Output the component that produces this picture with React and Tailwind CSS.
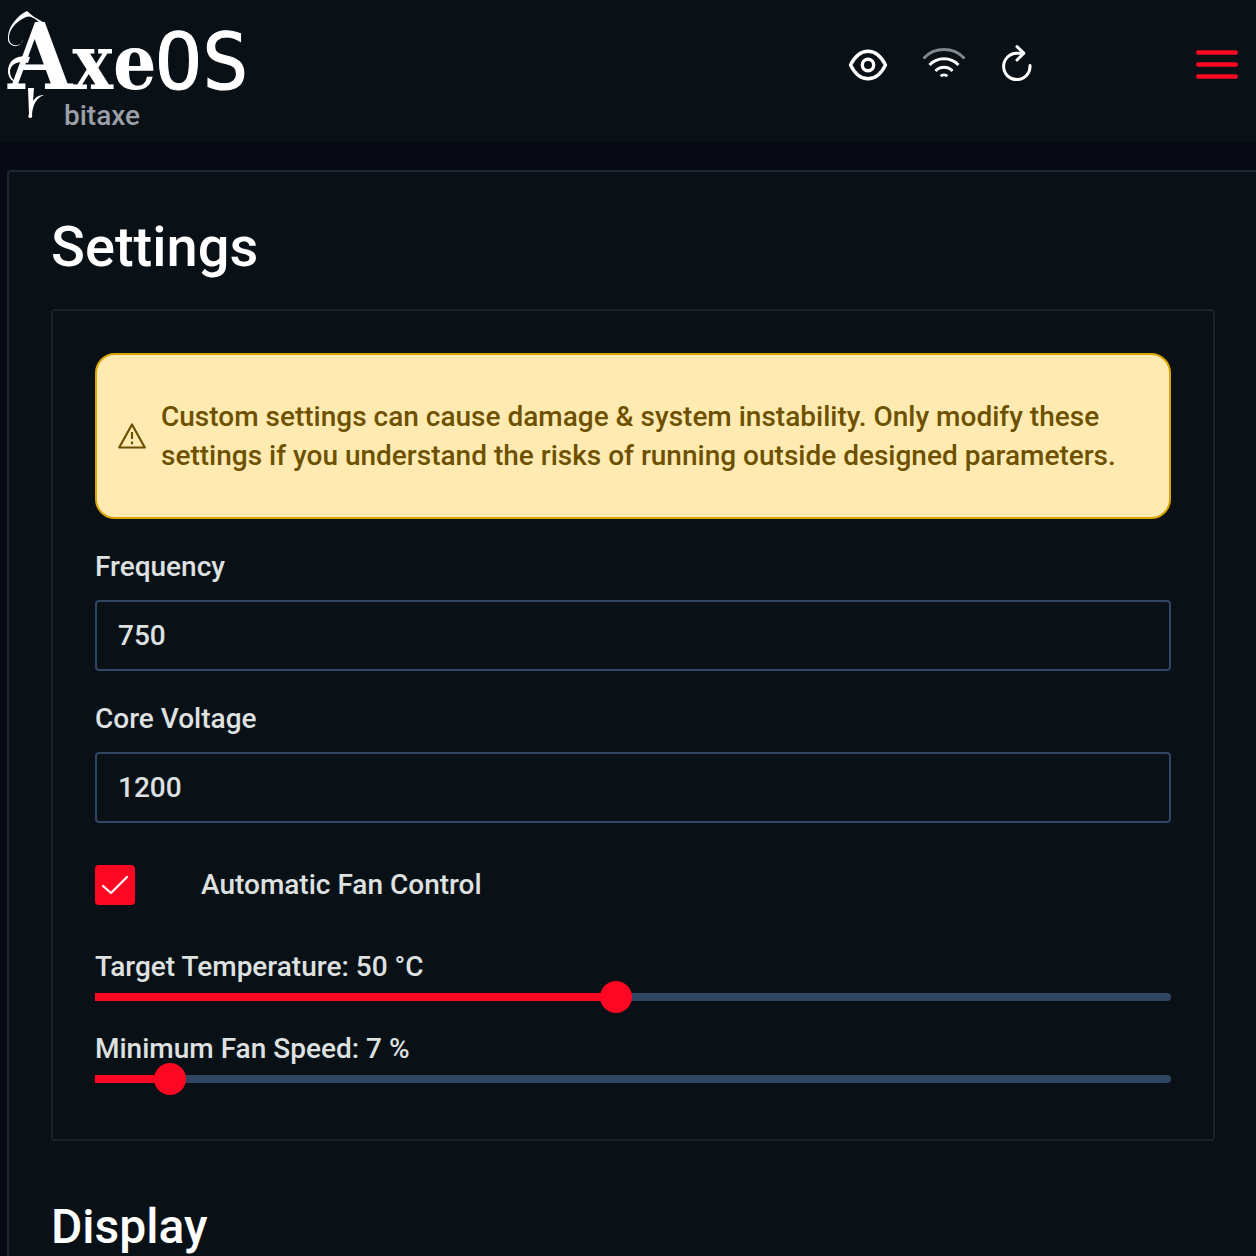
import { useState } from 'react';

function Logo() {
  return (
    <a href="#" aria-label="AxeOS" className="relative flex flex-col text-white">
      <span className="flex h-[100px] items-baseline leading-[124px]">
        <span className="w-[147px] font-['DejaVu_Serif_Condensed','Liberation_Serif',serif] text-[76px] font-bold">
          <span className="text-[92px] leading-none">A</span>xe
        </span>
        <span className="font-['DejaVu_Sans_Mono',monospace] text-[78px] [-webkit-text-stroke:1px_white]">OS</span>
      </span>
      {/* flourishes around the initial */}
      <svg className="absolute top-0 left-0" width="64" height="120" viewBox="0 0 64 120" fill="currentColor">
        <path d="M33 24C27 18 22 15 18 17C7 22 1 30 1 38C1 44 6 46 10 45C13 44 15 42 15 39C14 43 11 47 6 46C2 45 -1 42 0 36C1 26 9 16 19 11C23 15 29 19 35 22Z" />
        <path d="M20 63C10 60 3 64 2 71C2 76 4 79 8 82C3 81 0 77 0 71C0 60 10 54 22 57Z" />
        <path d="M20 88H26L25 101C28 97 31 95 36 95C28 98 25 105 24 114C25 117 23 118.500 22 118C20 118 20 116 21 114Z" />
      </svg>
      <span className="pl-14 text-[28px] leading-8 text-[#9c9fa7]">bitaxe</span>
    </a>
  );
}

function EyeIcon() {
  return (
    <svg width="40" height="34" viewBox="0 0 40 34" fill="none" stroke="currentColor" strokeWidth="3.400" strokeLinejoin="round">
      <path d="M2.500 17C7 8 13 3.200 20 3.200S33 8 37.500 17C33 26 27 30.800 20 30.800S7 26 2.500 17Z" />
      <circle cx="20" cy="17" r="5.700" />
    </svg>
  );
}

function WifiIcon() {
  return (
    <svg width="44" height="38" viewBox="0 0 44 38" fill="none" stroke="currentColor" strokeWidth="3" strokeLinecap="butt">
      <path d="M1.500 12.500A28 28 0 0 1 42.500 12.500" stroke="#84888b" />
      <path d="M7.500 19A20 20 0 0 1 36.500 19" />
      <path d="M13.500 25A11.500 11.500 0 0 1 30.500 25" />
      <path d="M18.700 30.200A5 5 0 0 1 25.300 30.200" />
    </svg>
  );
}

function RefreshIcon() {
  return (
    <svg width="32" height="42" viewBox="0 0 32 42" fill="none" stroke="currentColor" strokeWidth="3" strokeLinecap="round" strokeLinejoin="round">
      <path d="M30 21.500A13.200 13.200 0 1 1 16.800 9.200H23.500" />
      <path d="M17 2.700L23.800 9.200L17 16" />
    </svg>
  );
}

function MenuIcon() {
  return (
    <svg width="42" height="30" viewBox="0 0 42 30" fill="none" stroke="currentColor" strokeWidth="4.500" strokeLinecap="round">
      <path d="M2.300 2.500H39.700M2.300 14.500H39.700M2.300 26.500H39.700" />
    </svg>
  );
}

function Header() {
  return (
    <header className="flex h-[142px] items-start bg-[#091117] pr-[18px] pl-2 text-white">
      <Logo />
      <div className="ml-auto flex h-[130px] items-center gap-[34px]">
        <button type="button" aria-label="Toggle privacy"><EyeIcon /></button>
        <button type="button" aria-label="Wi-Fi status"><WifiIcon /></button>
        <button type="button" aria-label="Restart"><RefreshIcon /></button>
        <button type="button" aria-label="Menu" className="ml-[130px] text-[#fd0722]"><MenuIcon /></button>
      </div>
    </header>
  );
}

function Warning({ children }) {
  return (
    <div role="alert" className="flex h-[166px] items-center gap-[15px] rounded-[20px] border-2 border-[#dba400] bg-[#ffebb2] px-[21px] text-[#6d5100]">
      <svg className="shrink-0" width="28" height="26" viewBox="0 0 28 26" fill="none" stroke="currentColor" strokeWidth="2.200" strokeLinejoin="round">
        <path d="M14 1.500L26.800 24.500H1.200Z" />
        <path d="M14 9V16M14 18.500V21.200" />
      </svg>
      <p className="leading-[39px]">{children}</p>
    </div>
  );
}

function NumberField({ id, label, value, onChange }) {
  return (
    <div className="mt-[34px]">
      <label htmlFor={id} className="block leading-7">{label}</label>
      <input
        id={id}
        type="text"
        inputMode="numeric"
        value={value}
        onChange={(e) => onChange(e.target.value)}
        className="mt-[19px] block h-[71px] w-full rounded-sm border-2 border-[#304562] bg-[#091117] px-[21px] outline-none"
      />
    </div>
  );
}

function Slider({ id, label, min, max, value, onChange }) {
  const percent = ((value - min) / (max - min)) * 100;

  return (
    <div>
      <label htmlFor={id} className="block leading-7">{label}</label>
      <div className="grid items-center">
        <div className="col-start-1 row-start-1 h-2 rounded-r bg-[#304562]">
          <div className="h-2 bg-[#fd0722]" style={{ width: `${percent}%` }} />
        </div>
        {/* wider than the track so the handle is centred on the value */}
        <input
          id={id}
          type="range"
          min={min}
          max={max}
          value={value}
          onChange={(e) => onChange(Number(e.target.value))}
          className="z-10 col-start-1 row-start-1 -mx-4 h-8 appearance-none bg-transparent [&::-webkit-slider-thumb]:size-8 [&::-webkit-slider-thumb]:appearance-none [&::-webkit-slider-thumb]:rounded-full [&::-webkit-slider-thumb]:bg-[#fd0722]"
        />
      </div>
    </div>
  );
}

export default function App() {
  const [frequency, setFrequency] = useState('750');
  const [coreVoltage, setCoreVoltage] = useState('1200');
  const [autoFan, setAutoFan] = useState(true);
  const [targetTemp, setTargetTemp] = useState(50);
  const [minFanSpeed, setMinFanSpeed] = useState(7);

  return (
    <div className="flex min-h-screen flex-col overflow-hidden bg-[#070a13] font-[Roboto,sans-serif] text-[28px] font-medium text-[#dfe1e1]">
      <Header />
      <main className="mt-7 ml-[7px] grow rounded-tl border-t-2 border-l-2 border-[#1a2631] bg-[#091117] pt-[42px] pr-[41px] pl-[42px]">
        <h1 className="text-[56px] leading-[67px] font-medium text-white">Settings</h1>
        <section className="mt-7 rounded border-2 border-[#17222c] px-[42px] pt-[42px] pb-11">
          <Warning>
            Custom settings can cause damage &amp; system instability. Only modify these settings if you understand the risks of running outside designed parameters.
          </Warning>

          <NumberField id="frequency" label="Frequency" value={frequency} onChange={setFrequency} />
          <NumberField id="coreVoltage" label="Core Voltage" value={coreVoltage} onChange={setCoreVoltage} />

          <div className="mt-[42px] flex items-center gap-[66px]">
            <div className="grid size-10 place-items-center">
              <input
                id="autofanspeed"
                type="checkbox"
                checked={autoFan}
                onChange={(e) => setAutoFan(e.target.checked)}
                className="peer col-start-1 row-start-1 size-10 appearance-none rounded border-2 border-[#304562] checked:border-[#fd0722] checked:bg-[#fd0722]"
              />
              <svg className="pointer-events-none invisible col-start-1 row-start-1 text-white peer-checked:visible" width="28" height="20" viewBox="0 0 28 20" fill="none" stroke="currentColor" strokeWidth="2.200" strokeLinecap="round" strokeLinejoin="round">
                <path d="M2 11L10 18L26 2" />
              </svg>
            </div>
            <label htmlFor="autofanspeed" className="leading-7">Automatic Fan Control</label>
          </div>

          <div className="mt-12 flex flex-col gap-[22px]">
            <Slider id="temptarget" label={`Target Temperature: ${targetTemp} °C`} min={35} max={66} value={targetTemp} onChange={setTargetTemp} />
            <Slider id="minfanspeed" label={`Minimum Fan Speed: ${minFanSpeed} %`} min={0} max={100} value={minFanSpeed} onChange={setMinFanSpeed} />
          </div>
        </section>
        <h2 className="mt-[57px] text-5xl leading-[58px] font-medium text-white">Display</h2>
      </main>
    </div>
  );
}
